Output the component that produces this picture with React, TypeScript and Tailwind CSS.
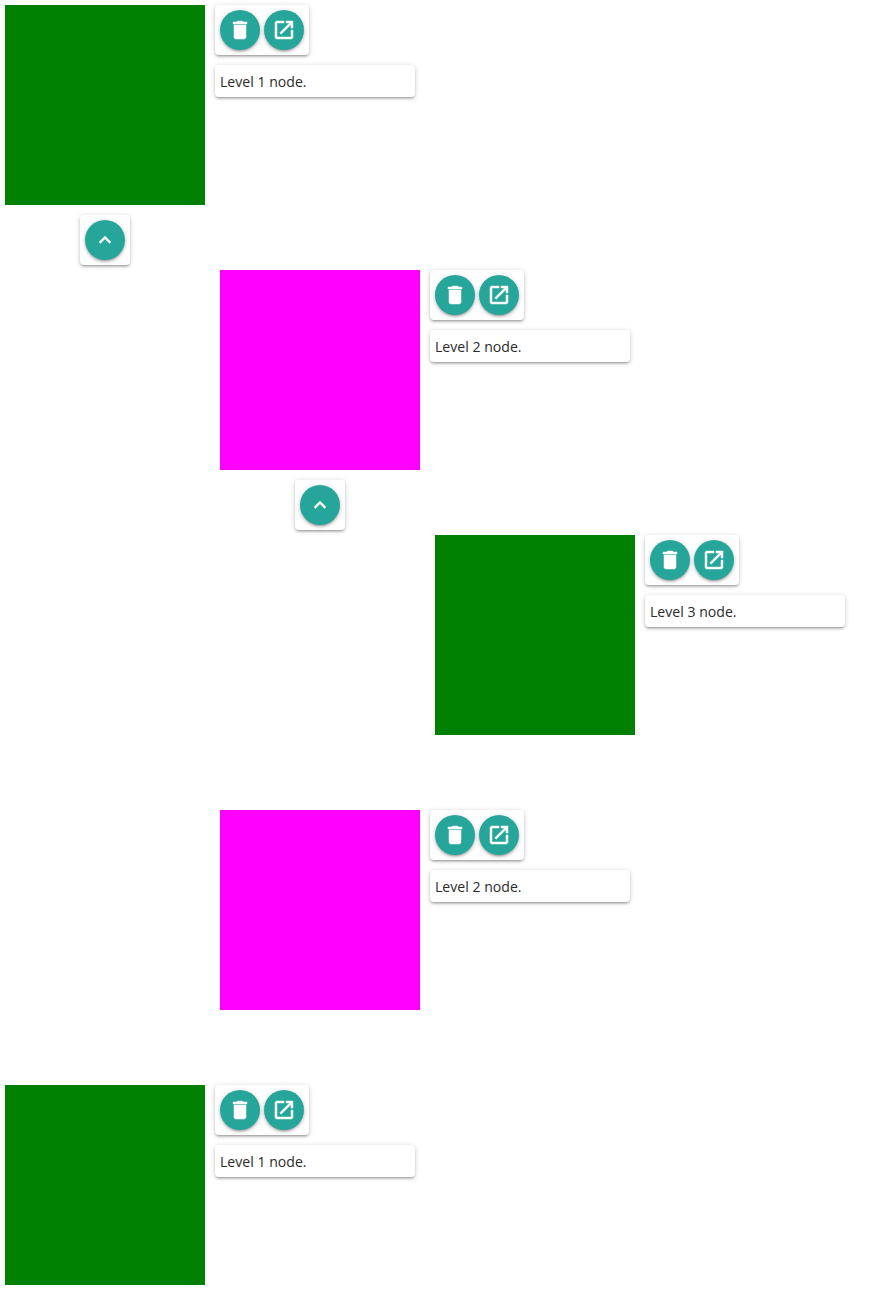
const cardShadow =
  "shadow-[0_2px_2px_0_rgba(0,0,0,0.14),0_3px_1px_-2px_rgba(0,0,0,0.12),0_1px_5px_0_rgba(0,0,0,0.2)]";

function Fab({ d }: { d: string }) {
  return (
    <button className="flex h-10 w-10 items-center justify-center rounded-full bg-[#26a69a] text-white shadow-[0_2px_2px_0_rgba(0,0,0,0.14),0_3px_1px_-2px_rgba(0,0,0,0.12),0_1px_5px_0_rgba(0,0,0,0.2)]">
      <svg viewBox="0 0 24 24" className="h-6 w-6" fill="currentColor" stroke="currentColor" strokeWidth="0.45">
        <path d={d} />
      </svg>
    </button>
  );
}

const DELETE = "M6 19c0 1.1.9 2 2 2h8c1.1 0 2-.9 2-2V7H6v12zM19 4h-3.5l-1-1h-5l-1 1H5v2h14V4z";
const OPEN =
  "M19 19H5V5h7V3H5c-1.11 0-2 .9-2 2v14c0 1.1.89 2 2 2h14c1.1 0 2-.9 2-2v-7h-2v7zM14 3v2h3.59l-9.83 9.83 1.41 1.41L19 6.41V10h2V3h-7z";
const UP = "M12 8l-6 6 1.41 1.41L12 10.83l4.59 4.58L18 14z";

function Node({ level, color }: { level: number; color: string }) {
  return (
    <div className="flex gap-[10px]">
      <div className={`h-[200px] w-[200px] ${color}`} />
      <div className="flex flex-col items-start gap-[10px]">
        <div className={`flex gap-1 rounded bg-white p-[5px] ${cardShadow}`}>
          <Fab d={DELETE} />
          <Fab d={OPEN} />
        </div>
        <div
          className={`h-8 w-[200px] rounded bg-white px-[5px] pt-px text-[14.1px] leading-8 text-[#2b2b2b] ${cardShadow}`}
        >
          Level {level} node.
        </div>
      </div>
    </div>
  );
}

function Collapse() {
  return (
    <div className="mt-[10px] mb-[5px] flex w-[200px] justify-center">
      <div className={`rounded bg-white p-[5px] ${cardShadow}`}>
        <Fab d={UP} />
      </div>
    </div>
  );
}

export default function App() {
  return (
    <div className="min-h-[1293px] bg-white pt-[5px] pl-[5px] font-['Open_Sans','Noto_Sans',sans-serif]">
      <Node level={1} color="bg-[#008000]" />
      <Collapse />
      <div className="ml-[215px]">
        <Node level={2} color="bg-[#ff00ff]" />
        <Collapse />
        <div className="ml-[215px]">
          <Node level={3} color="bg-[#008000]" />
        </div>
        <div className="mt-[75px]">
          <Node level={2} color="bg-[#ff00ff]" />
        </div>
      </div>
      <div className="mt-[75px]">
        <Node level={1} color="bg-[#008000]" />
      </div>
    </div>
  );
}
